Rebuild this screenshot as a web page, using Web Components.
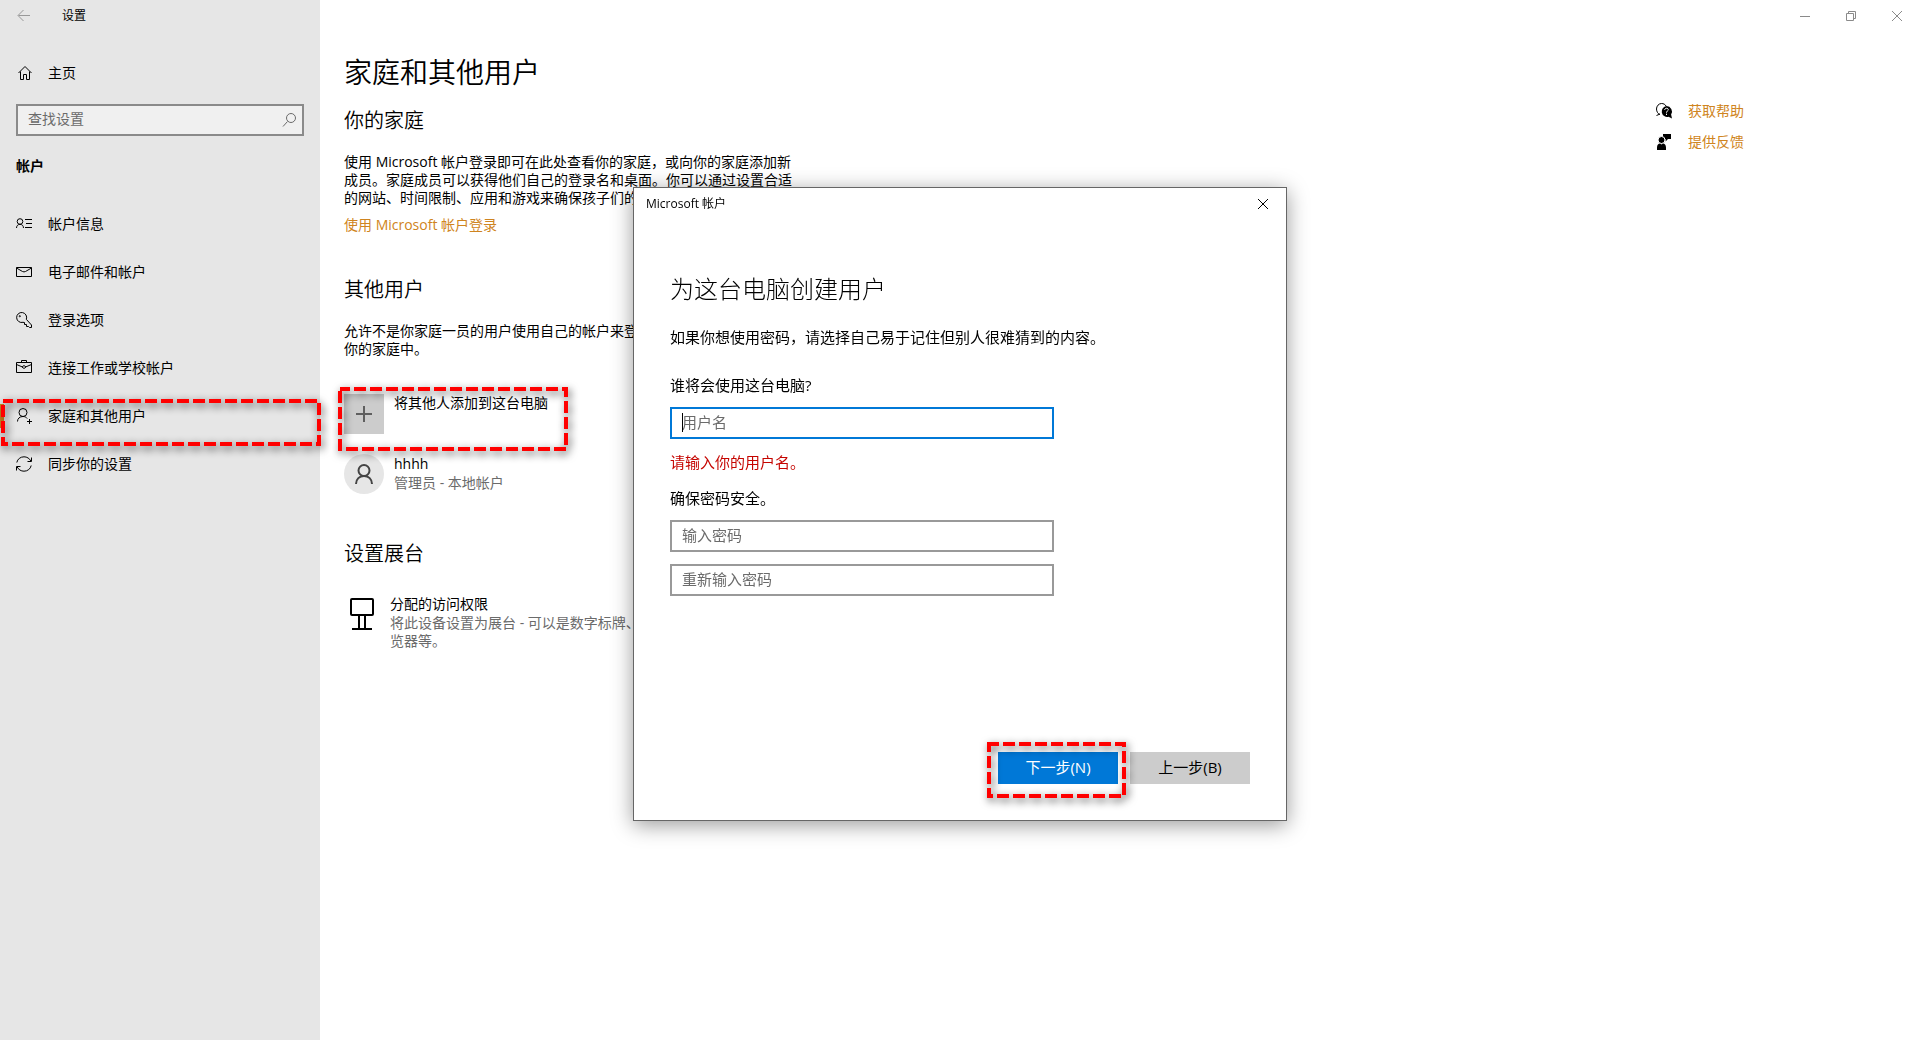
<!DOCTYPE html>
<html lang="zh-CN">
<head>
<meta charset="utf-8">
<meta name="viewport" content="width=device-width, initial-scale=1">
<title>设置</title>
<style>
    :root {
        --accent: #cf8420;
        --primary: #0078d7;
        --danger: #c50500;
        --muted: #6b6b6b;
        --pane: #e6e6e6;
        --tile: #cccccc;
    }
    body {
        margin: 0;
        background: #fff;
        color: #000;
        font: 14px/18px "Open Sans", "Noto Sans CJK SC", sans-serif;
    }
</style>
</head>
<body>
<settings-window>
    <settings-pane slot="pane">
        <nav-item slot="home" icon="home" href="#home">主页</nav-item>
        <nav-item icon="info" href="#info">帐户信息</nav-item>
        <nav-item icon="mail" href="#mail">电子邮件和帐户</nav-item>
        <nav-item icon="key" href="#signin">登录选项</nav-item>
        <nav-item icon="work" href="#work">连接工作或学校帐户</nav-item>
        <nav-item icon="family" href="#family" selected>家庭和其他用户</nav-item>
        <nav-item icon="sync" href="#sync">同步你的设置</nav-item>
    </settings-pane>

    <family-page></family-page>

    <help-links slot="aside"></help-links>
</settings-window>

<account-dialog>Microsoft 帐户</account-dialog>

<script>
// Icon shapes by name: [width, height, markup], drawn with currentColor
const ICONS = {
    back: [16, 16, '<path d="M14 7.500H2.500M7.500 2L2 7.500 7.500 13"/>'],
    home: [16, 16, '<path d="M2.500 8L9 1.500 15.500 8M4.500 6.500v8h3v-5h3v5h3v-8"/>'],
    search: [16, 16, '<circle cx="11" cy="6" r="4.500"/><path d="M7.500 9.500L3 14.500"/>'],
    info: [16, 16, '<circle cx="4" cy="5.500" r="2.800"/><path d="M.5 12C.5 9.800 2 8.300 4 8.300S7.500 9.800 7.500 12M9 3.500h7M10 7.500h6M9 11.500h7"/>'],
    mail: [16, 16, '<path d="M.5 3.500h15v9H.5zM.5 4L6.500 7.500Q8 8.300 9.500 7.500L15.500 4"/>'],
    key: [16, 16, '<path d="M10.300 7.300A5 5 0 1 0 7 10.300l1.500.2v2h2v2h2l1 1h2v-2.500z"/><circle cx="3.800" cy="4.200" r=".6"/>'],
    work: [16, 16, '<path d="M.5 2.500h15v10H.5zM5.500 2.500v-2h5v2M.5 4.500L6 6.800M15.500 4.500L10 6.800M8 5.500L10 7 8 8.500 6 7z"/>'],
    family: [16, 16, '<circle cx="7" cy="4.500" r="4"/><path d="M1.500 13.500c0-3 2.200-5 5.500-5 2 0 3.300.8 4.200 2M11 13.500h5M13.500 11v5"/>'],
    sync: [16, 16, '<path d="M.8 6.500C1.500 3 4.500.8 8 .8c3 0 5.500 1.600 6.800 4.200M15.500 1.500v4h-4M15.200 9.500c-.7 3.500-3.700 5.700-7.200 5.700-3 0-5.500-1.600-6.800-4.200M.5 14.500v-4h4"/>'],
    plus: [16, 16, '<path d="M8 0v16M0 8h16" stroke-width="2" opacity=".8"/>'],
    person: [20, 20, '<g stroke-width="2"><circle cx="10" cy="6.500" r="5.500"/><path d="M2 20c0-5 3.500-8 8-8s8 3 8 8"/></g>'],
    kiosk: [36, 32, '<g stroke-width="2"><rect x="7" y="1" width="22" height="16" rx="1"/><path d="M15 17v13M21 17v13M8 31h20"/></g>'],
    minimize: [10, 10, '<path d="M0 5.500h10"/>'],
    restore: [10, 10, '<path d="M.5 2.500h7v7h-7zM2.500 2.500v-2h7v7h-2"/>'],
    close: [10, 10, '<path d="M0 0l10 10M10 0L0 10"/>'],
    help: [16, 16, '<path d="M4 11.500C2 11 .5 8.500.5 6 .5 3 2.800.5 5.500.5c2 0 3.700.9 4.500 2.500M.5 12.500L4 11"/><path stroke="none" fill="currentColor" d="M10.500 3a5.500 5.500 0 0 1 4.600 8.500l.9 4-3.500-1.700A5.500 5.500 0 1 1 10.500 3z"/><path stroke="#fff" d="M8.700 7c0-2.300 3.600-2.300 3.600-.3 0 1.300-1.800 1.300-1.800 3M10.500 10.700V12"/>'],
    feedback: [16, 16, '<path stroke="none" fill="currentColor" d="M7 0h8v5h-3L9.500 7.500V5H7z"/><circle cx="5.500" cy="6" r="3.500" stroke="#fff" fill="currentColor"/><path stroke="none" fill="currentColor" d="M1 16v-2.500C1 11 2.500 9.500 4 9.500l1.500 1 1.500-1c1.500 0 3 1.500 3 4V16z"/>'],
};

// Shared base: clones the class template into an open shadow root
class BaseElement extends HTMLElement {
    constructor() {
        super();
        const template = document.createElement('template');
        template.innerHTML = this.constructor.markup;
        this.attachShadow({ mode: 'open' }).append(template.content.cloneNode(true));
    }
}

class UiIcon extends HTMLElement {
    constructor() {
        super();
        this.attachShadow({ mode: 'open' });
    }

    static get observedAttributes() {
        return ['name'];
    }

    attributeChangedCallback() {
        const [width, height, shapes] = ICONS[this.getAttribute('name')];
        this.shadowRoot.innerHTML = `
            <style>
                :host { display: inline-flex; flex: none; }
                svg { display: block; overflow: visible; }
            </style>
            <svg width="${width}" height="${height}" viewBox="0 0 ${width} ${height}"
                fill="none" stroke="currentColor" aria-hidden="true">${shapes}</svg>
        `;
    }
}

// Red dashed marker laid over its positioned parent; --inset sets the reach
class CalloutFrame extends BaseElement {
    static markup = `
        <style>
            :host {
                position: absolute;
                inset: var(--inset, 0);
                z-index: 2;
                pointer-events: none;
            }
            svg {
                display: block;
                width: 100%;
                height: 100%;
                overflow: visible;
                filter: drop-shadow(2px 3px 4px rgba(0, 0, 0, 0.7));
            }
            rect {
                x: 2px;
                y: 2px;
                width: calc(100% - 4px);
                height: calc(100% - 4px);
                fill: none;
                stroke: #f00;
                stroke-width: 4px;
                stroke-dasharray: 12 4;
                stroke-dashoffset: 2px;
            }
        </style>
        <svg aria-hidden="true"><rect/></svg>
    `;
}

class SettingsWindow extends BaseElement {
    static markup = `
        <style>
            :host {
                display: grid;
                grid-template-columns: 320px 1fr;
                min-height: 100vh;
            }
            .main { display: flex; flex-direction: column; }
            .controls {
                display: flex;
                justify-content: flex-end;
                height: 32px;
            }
            .controls button {
                display: grid;
                place-items: center;
                width: 46px;
                padding: 0;
                border: 0;
                background: none;
                color: #8a8a8a;
            }
            .body {
                display: flex;
                justify-content: space-between;
                padding: 22px 0 24px 24px;
            }
        </style>
        <slot name="pane"></slot>
        <div class="main">
            <div class="controls">
                <button aria-label="最小化"><ui-icon name="minimize"></ui-icon></button>
                <button aria-label="还原"><ui-icon name="restore"></ui-icon></button>
                <button aria-label="关闭"><ui-icon name="close"></ui-icon></button>
            </div>
            <div class="body">
                <slot></slot>
                <slot name="aside"></slot>
            </div>
        </div>
    `;
}

class SettingsPane extends BaseElement {
    static markup = `
        <style>
            :host { display: block; background: var(--pane); }
            header {
                display: flex;
                align-items: center;
                gap: 14px;
                height: 32px;
                margin-bottom: 17px;
                font-size: 12px;
            }
            header button {
                display: grid;
                place-items: center;
                width: 48px;
                padding: 0;
                border: 0;
                background: none;
                color: #999;
            }
            .search {
                display: flex;
                align-items: center;
                box-sizing: border-box;
                height: 32px;
                margin: 7px 16px 20px;
                padding: 0 6px 0 10px;
                border: 2px solid #8a8a8a;
                background: #f0f0f0;
                color: var(--muted);
            }
            input {
                flex: 1;
                min-width: 0;
                padding: 0 0 2px;
                border: 0;
                outline: 0;
                background: none;
                font: inherit;
            }
            input::placeholder { color: var(--muted); }
            h2 {
                margin: 0 16px 24px;
                font-size: 14px;
                line-height: 20px;
            }
            nav { display: block; }
        </style>
        <header>
            <button aria-label="后退"><ui-icon name="back"></ui-icon></button>
            <span>设置</span>
        </header>
        <slot name="home"></slot>
        <label class="search">
            <input type="search" placeholder="查找设置" aria-label="查找设置">
            <ui-icon name="search"></ui-icon>
        </label>
        <h2>帐户</h2>
        <nav><slot></slot></nav>
    `;
}

class NavItem extends BaseElement {
    static markup = `
        <style>
            :host { display: block; position: relative; }
            a {
                display: flex;
                align-items: center;
                gap: 16px;
                height: 48px;
                padding: 0 16px;
                color: inherit;
                text-decoration: none;
            }
            callout-frame { display: none; --inset: 7px -1px -6px 1px; }
            :host([selected]) callout-frame { display: block; }
            :host([selected])::before {
                content: '';
                position: absolute;
                left: 0;
                top: 12px;
                width: 4px;
                height: 24px;
                background: var(--accent);
            }
        </style>
        <a><ui-icon></ui-icon><slot></slot></a>
        <callout-frame></callout-frame>
    `;

    connectedCallback() {
        this.shadowRoot.querySelector('a').href = this.getAttribute('href');
        this.shadowRoot.querySelector('ui-icon').setAttribute('name', this.getAttribute('icon'));
    }
}

class FamilyPage extends BaseElement {
    static markup = `
        <style>
            :host { display: block; max-width: 452px; }
            h1, h2, p { margin: 0; }
            h1, h2 { font-weight: 350; }
            h1 { margin-bottom: 17px; font-size: 28px; line-height: 36px; }
            h2 { margin-bottom: 18px; font-size: 20px; line-height: 28px; }
            section { margin-bottom: 42px; }
            a {
                display: inline-block;
                margin-top: 9px;
                color: var(--accent);
                text-decoration: none;
                vertical-align: top;
            }
            small {
                display: block;
                margin-top: 1px;
                color: var(--muted);
                font-size: 14px;
            }
            .add, .user, .kiosk { display: flex; gap: 10px; }
            .add {
                position: relative;
                margin: 36px 0 20px;
                padding: 0;
                border: 0;
                background: none;
                color: inherit;
                font: inherit;
                --inset: -7px -20px -17px -6px;
            }
            .user { padding-bottom: 4px; }
            .user div { padding-top: 1px; }
            .tile {
                display: grid;
                place-items: center;
                flex: none;
                width: 40px;
                height: 40px;
                background: var(--tile);
                color: #444;
            }
            .round { border-radius: 50%; background: var(--pane); }
            .kiosk { padding-top: 9px; }
            .kiosk ui-icon { padding-top: 3px; }
        </style>
        <h1>家庭和其他用户</h1>
        <section>
            <h2>你的家庭</h2>
            <p>使用 Microsoft 帐户登录即可在此处查看你的家庭，或向你的家庭添加新成员。家庭成员可以获得他们自己的登录名和桌面。你可以通过设置合适的网站、时间限制、应用和游戏来确保孩子们的安全。</p>
            <a href="#signin">使用 Microsoft 帐户登录</a>
        </section>
        <section>
            <h2>其他用户</h2>
            <p>允许不是你家庭一员的用户使用自己的帐户来登录。这不会将他们添加到你的家庭中。</p>
            <button class="add">
                <span class="tile"><ui-icon name="plus"></ui-icon></span>
                <span>将其他人添加到这台电脑</span>
                <callout-frame></callout-frame>
            </button>
            <div class="user">
                <span class="tile round"><ui-icon name="person"></ui-icon></span>
                <div>hhhh<small>管理员 - 本地帐户</small></div>
            </div>
        </section>
        <section>
            <h2>设置展台</h2>
            <div class="kiosk">
                <ui-icon name="kiosk"></ui-icon>
                <div>分配的访问权限<small>将此设备设置为展台 - 可以是数字标牌、交互式显示屏或者公共浏览器等。</small></div>
            </div>
        </section>
    `;
}

class HelpLinks extends BaseElement {
    static markup = `
        <style>
            :host {
                display: flex;
                flex-direction: column;
                gap: 13px;
                flex: none;
                width: 264px;
                padding-top: 48px;
            }
            a {
                display: flex;
                align-items: center;
                gap: 16px;
                color: var(--accent);
                text-decoration: none;
            }
            ui-icon { color: #000; }
        </style>
        <a href="#help"><ui-icon name="help"></ui-icon>获取帮助</a>
        <a href="#feedback"><ui-icon name="feedback"></ui-icon>提供反馈</a>
    `;
}

class AccountDialog extends BaseElement {
    static markup = `
        <style>
            :host {
                position: fixed;
                inset: 0;
                z-index: 1;
                display: grid;
                place-items: center;
                padding-bottom: 32px;
                font-size: 15px;
                line-height: 20px;
            }
            .window {
                box-sizing: border-box;
                width: 654px;
                max-width: 100%;
                border: 1px solid #666;
                background: #fff;
                box-shadow: 0 4px 20px rgba(0, 0, 0, 0.4);
            }
            header {
                display: flex;
                align-items: center;
                justify-content: space-between;
                height: 32px;
                padding-left: 12px;
                font-size: 12px;
            }
            header button {
                display: grid;
                place-items: center;
                width: 46px;
                height: 32px;
                padding: 0;
                border: 0;
                background: none;
                color: #000;
            }
            form { padding: 53px 36px 36px; }
            h1 {
                margin: 0 0 22px;
                font-size: 24px;
                font-weight: 300;
                line-height: 32px;
            }
            p { margin: 0; }
            .intro { margin-bottom: 28px; }
            label { display: block; margin-bottom: 12px; }
            .error { margin: 13px 0 16px; color: var(--danger); }
            .field { position: relative; max-width: 384px; }
            .field + .field { margin-top: 12px; }
            input {
                display: block;
                box-sizing: border-box;
                width: 100%;
                height: 32px;
                padding: 0 10px 2px;
                border: 2px solid #999;
                outline: 0;
                background: #fff;
                font: inherit;
            }
            input::placeholder { color: var(--muted); }
            .active input { border-color: var(--primary); }
            /* steady text cursor */
            .active::before {
                content: '';
                position: absolute;
                left: 12px;
                top: 6px;
                width: 1px;
                height: 19px;
                background: #000;
            }
            footer {
                display: flex;
                justify-content: flex-end;
                gap: 12px;
                margin-top: 156px;
            }
            footer button {
                position: relative;
                width: 120px;
                height: 32px;
                padding: 0 0 2px;
                border: 0;
                background: var(--tile);
                color: #000;
                font: inherit;
            }
            footer .next {
                z-index: 1;
                background: var(--primary);
                color: #fff;
                --inset: -10px -8px -14px -11px;
            }
        </style>
        <div class="window" role="dialog" aria-labelledby="title">
            <header>
                <span id="title"><slot></slot></span>
                <button aria-label="关闭"><ui-icon name="close"></ui-icon></button>
            </header>
            <form>
                <h1>为这台电脑创建用户</h1>
                <p class="intro">如果你想使用密码，请选择自己易于记住但别人很难猜到的内容。</p>
                <label for="name">谁将会使用这台电脑?</label>
                <div class="field active"><input id="name" type="text" placeholder="用户名"></div>
                <p class="error">请输入你的用户名。</p>
                <label for="password">确保密码安全。</label>
                <div class="field"><input id="password" type="password" placeholder="输入密码"></div>
                <div class="field"><input type="password" placeholder="重新输入密码" aria-label="重新输入密码"></div>
                <footer>
                    <button type="button" class="next">下一步(N)<callout-frame></callout-frame></button>
                    <button type="button">上一步(B)</button>
                </footer>
            </form>
        </div>
    `;
}

customElements.define('ui-icon', UiIcon);
customElements.define('callout-frame', CalloutFrame);
customElements.define('nav-item', NavItem);
customElements.define('settings-window', SettingsWindow);
customElements.define('settings-pane', SettingsPane);
customElements.define('family-page', FamilyPage);
customElements.define('help-links', HelpLinks);
customElements.define('account-dialog', AccountDialog);
</script>
</body>
</html>
